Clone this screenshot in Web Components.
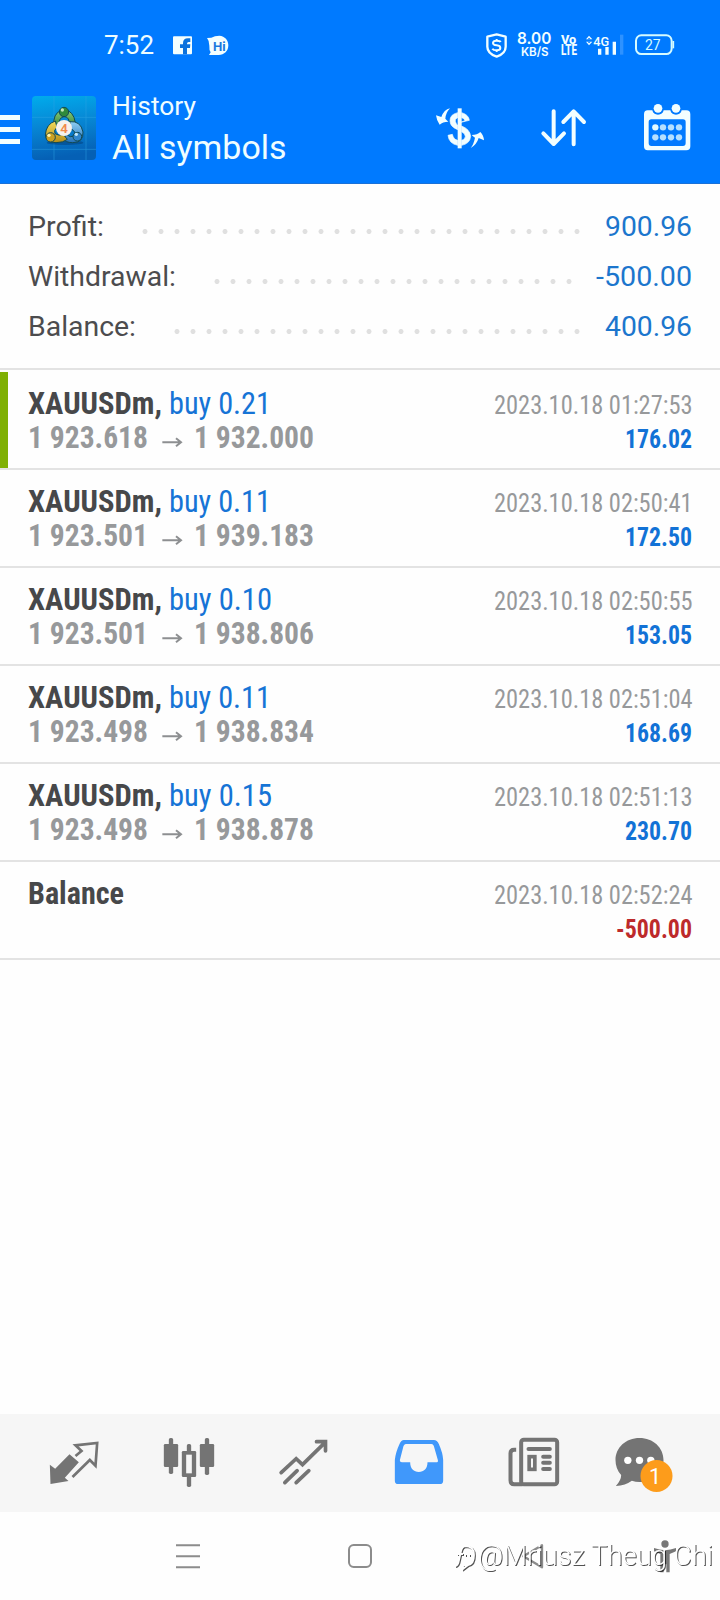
<!DOCTYPE html>
<html lang="en">
<head>
<meta charset="utf-8">
<title>History</title>
<style>
html,body{margin:0;padding:0;background:#fefefe;font-family:Roboto,"Liberation Sans",sans-serif}
</style>
</head>
<body>
<history-screen></history-screen>
<script>
const define=(n,c)=>customElements.define(n,c);

/* One line of text set to an exact advance width. */
define('fit-text',class extends HTMLElement{
  connectedCallback(){
    const a=(k,d)=>this.getAttribute(k)||d;
    const w=+a('w'),h=+a('h',30),b=+a('b',24);
    this.attachShadow({mode:'open'}).innerHTML=`<style>
      :host{display:block;flex:none;width:${w}px;height:${h}px}
      svg{display:block;overflow:visible}
      text{font-family:Roboto,sans-serif;font-size:${a('size')}px;font-weight:${a('weight',400)};font-stretch:${a('stretch','100%')};fill:currentColor}
    </style><svg width="${w}" height="${h}"><text x="0" y="${b}" textLength="${w}" lengthAdjust="spacingAndGlyphs">${this.textContent}</text></svg>`;
  }
});

const W='#f2feff';
const ICONS={
 fb:{vb:'519 107 58 56',s:`<rect x="519" y="108" width="57" height="54" rx="3" fill="${W}"/><path d="M549 162V143H540V132H549V129Q549 114 564 114H571V125H566Q561 125 561 130V132H571L570 143H561V162Z" fill="#0b72dd"/>`},
 hi:{vb:'621 105 66 62',s:`<path d="M621 114L634 113Q644 107 658 107C675 108 685 121 685 136C685 153 673 165 656 165H627L632 157Q627 150 628 137Q628 122 621 114Z" fill="${W}"/><text x="639" y="152" font-family="Inter,sans-serif" font-weight="700" font-size="35" textLength="38" lengthAdjust="spacingAndGlyphs" fill="#1978de">Hi</text>`},
 shield:{vb:'378 97 63 75',s:`<path d="M410 101L437 108V138Q437 158 410 168Q382 158 382 138V108Z" fill="none" stroke="${W}" stroke-width="7" stroke-linejoin="round"/><path d="M422 124Q420 120 410 120Q399 120 399 127Q399 133 410 134Q421 135 421 142Q421 149 410 149Q400 149 397 144M410 115V121M410 148V154" fill="none" stroke="${W}" stroke-width="6"/>`},
 speed:{vb:'471 97 104 78',s:`<g fill="${W}" font-family="Inter,sans-serif"><text x="471" y="134" font-size="48" font-weight="600" textLength="103" lengthAdjust="spacingAndGlyphs">8.00</text><text x="483" y="169" font-size="37" font-weight="600" textLength="83" lengthAdjust="spacingAndGlyphs">KB/S</text></g>`},
 volte:{vb:'602 97 48 78',s:`<g fill="${W}" font-family="Roboto,sans-serif" font-weight="800"><text x="602" y="132" font-size="36" textLength="46" lengthAdjust="spacingAndGlyphs">Vo</text><text x="602" y="166" font-size="42" textLength="48" lengthAdjust="spacingAndGlyphs">LTE</text></g>`},
 signal:{vb:'678 97 114 78',s:`<path d="M678 119L687 108L697 119ZM678 126L687 137L697 126Z" fill="${W}"/><path d="M683 119L687 114L692 119ZM683 126L687 131L692 126Z" fill="#007aff"/><text x="700" y="138" font-size="41" font-weight="500" font-family="Roboto,sans-serif" textLength="48" lengthAdjust="spacingAndGlyphs" fill="${W}">4G</text><path d="M719 147V165M741 142V165M763 126V165" stroke="${W}" stroke-width="10"/><path d="M785 105V165" stroke="#2e92ff" stroke-width="10"/>`},
 battery:{vb:'825 97 119 78',s:`<rect x="828" y="107" width="107" height="56" rx="16" fill="none" stroke="#d6fbff" stroke-width="6"/><path d="M940 124V146" stroke="#d6fbff" stroke-width="5"/><text x="855" y="150" font-size="44" font-family="Roboto,sans-serif" textLength="47" lengthAdjust="spacingAndGlyphs" fill="#d6fbff">27</text>`},
 menu:{vb:'0 345 60 87',s:`<path d="M0 352.500H60M0 388.500H60M0 424.500H60" stroke="${W}" stroke-width="15"/>`},
 logo:{vb:'36 48 192 192',s:`<defs><linearGradient id="bg" x1="0" y1="0" x2=".15" y2="1"><stop offset="0" stop-color="#00acec"/><stop offset=".45" stop-color="#0789d6"/><stop offset="1" stop-color="#0560b5"/></linearGradient>
  <linearGradient id="gr" x1="0" y1="0" x2="0" y2="1"><stop offset="0" stop-color="#8fd07a"/><stop offset="1" stop-color="#2f7d35"/></linearGradient>
  <linearGradient id="ye" x1="0" y1="0" x2="0" y2="1"><stop offset="0" stop-color="#f2dc5c"/><stop offset="1" stop-color="#b58d18"/></linearGradient>
  <linearGradient id="bl" x1="0" y1="0" x2="0" y2="1"><stop offset="0" stop-color="#8fd0f4"/><stop offset="1" stop-color="#2370b8"/></linearGradient></defs>
  <rect x="36" y="48" width="192" height="192" rx="12" fill="url(#bg)"/>
  <path d="M102 48V240M198 48V240M36 112H228M36 208H228" stroke="#2fa4e4" stroke-width="2" opacity=".7"/>
  <ellipse cx="135" cy="188" rx="55" ry="7" fill="#04427f" opacity=".55"/>
  <g stroke="#124a54" stroke-width="3">
  <path d="M101 140Q98 100 124 91Q150 85 162 112Q170 128 161 142L147 138Q151 110 132 110Q116 112 116 138Z" fill="url(#gr)"/><circle cx="132" cy="96" r="14" fill="#2f8a3c"/>
  <path d="M150 125Q182 122 189 156Q191 188 158 188Q136 188 130 176L140 164Q150 174 163 168Q171 156 151 145Z" fill="url(#bl)"/><circle cx="172" cy="170" r="13" fill="#2f86cd"/>
  <path d="M106 123Q78 132 76 165Q79 188 108 188Q130 188 142 178L130 164Q115 168 105 161Q100 151 111 142Z" fill="url(#ye)"/><circle cx="92" cy="172" r="14" fill="#caa022"/></g>
  <circle cx="127" cy="90" r="5" fill="#c5e7b8"/><circle cx="169" cy="163" r="5" fill="#c2e8fa"/><circle cx="87" cy="166" r="5" fill="#fff5b0"/>
  <circle cx="132" cy="144" r="24" fill="#f6f2ec"/><text x="132" y="158" font-family="Roboto,sans-serif" font-weight="600" font-size="40" text-anchor="middle" fill="#f08a4b">4</text>`},
 dollar:{vb:'228 320 144 126',s:`<path d="M299 324V444" stroke="${W}" stroke-width="12"/><path d="M302 366L328 360Q326 343 305 337V352Q313 353 315 361ZM293 337V352Q284 356 286 363Q288 372 293 374V388Q270 379 270 361Q270 342 293 337M305 377Q330 387 332 408Q330 430 305 435V420Q316 417 316 408Q315 399 305 394ZM293 435Q267 430 264 405L277 402Q281 418 293 420Z" fill="${W}" stroke="${W}" stroke-width="2"/><path d="M270 324Q252 328 244 350L228 345Q230 362 239 373Q248 364 265 364Q260 360 256 355Q257 338 270 324ZM332 443Q350 433 356 413L372 420Q371 405 361 395Q352 404 335 404Q340 409 345 412Q341 432 332 443Z" fill="${W}"/>`},
 sort:{vb:'544 328 136 112',s:`<path d="M582 335V432M551 401L582 433L613 401M642 434V336M611 367L642 335L673 367" fill="none" stroke="${W}" stroke-width="12" stroke-linecap="round" stroke-linejoin="round"/>`},
 calendar:{vb:'852 311 139 139',s:`<path fill-rule="evenodd" d="M863 330H877Q880 343 894 343Q908 343 911 330H931Q934 343 948 343Q962 343 965 330H979Q991 330 991 342V438Q991 450 979 450H863Q852 450 852 438V342Q852 330 863 330ZM874 357Q866 357 866 365V428Q866 437 874 437H969Q977 437 977 428V365Q977 357 969 357Z" fill="${W}"/><circle cx="894" cy="324" r="13" fill="${W}"/><circle cx="948" cy="324" r="13" fill="${W}"/><g fill="#b5e0ff"><circle cx="886" cy="381" r="9.5" fill="#e3fbff"/><circle cx="909" cy="381" r="9.5"/><circle cx="933" cy="381" r="9.5"/><circle cx="957" cy="381" r="9.5"/><circle cx="886" cy="411" r="9.5"/><circle cx="909" cy="411" r="9.5"/><circle cx="933" cy="411" r="9.5"/><circle cx="957" cy="411" r="9.5"/></g>`},
 arrow:{vb:'484 740 60 32',s:`<path d="M485 756H541M526 744L541 756L526 768" fill="none" stroke="#8d8f91" stroke-width="6"/>`},
 quotes:{vb:'130.5 99 180 180',s:`<path d="M148 194L164 206L207 163L235 187L193 233L204 243L150 252Z" fill="#747474"/><path d="M225 168L243 153L225 136L290 129L285 197L268 180L216 231" fill="none" stroke="#747474" stroke-width="8"/>`},
 charts:{vb:'475.5 99 180 180',s:`<g fill="#747474"><rect x="505" y="114" width="13" height="108" rx="5"/><rect x="490" y="132" width="43" height="69" rx="4"/><rect x="559" y="132" width="13" height="129" rx="5"/><rect x="544" y="153" width="43" height="78" rx="4"/><rect x="613" y="114" width="13" height="111" rx="5"/><rect x="598" y="132" width="43" height="69" rx="4"/></g><rect x="557" y="164" width="17" height="56" fill="#f6f6f6"/>`},
 trade:{vb:'820.5 99 180 180',s:`<path d="M842 218L887 176L906 194L974 127M948 125H975V153M853 248L890 212M887 248L925 212" fill="none" stroke="#747474" stroke-width="11" stroke-linecap="round"/>`},
 inbox:{vb:'85.5 99 180 180',s:`<path fill-rule="evenodd" d="M130 120H220Q230 120 235 132Q247 159 248 180V242Q248 252 238 252H113Q103 252 103 242V180Q105 158 117 132Q122 120 130 120ZM136 132Q132 132 129 138L118 181Q118 187 124 187H149C149 207 160 216 175 216C190 216 201 207 201 187H227Q234 187 232 180L220 138Q218 132 213 132Z" fill="#4098fb"/>`},
 news:{vb:'430.5 99 180 180',s:`<g fill="none" stroke="#747474" stroke-width="12"><rect x="482" y="119" width="108" height="134" rx="8"/><path d="M467 149H461Q450 149 450 160V241Q450 253 461 253H486"/><path d="M504 147H568M548 170H568M548 188H568M548 207H568" stroke-linecap="round"/><rect x="506" y="170" width="17" height="38" stroke-width="11"/></g>`},
 chat:{vb:'775.5 99 180 180',s:`<path d="M837 114C878 114 909 143 909 180C909 218 878 246 837 246Q825 246 814 242Q795 256 766 258Q782 241 782 225Q765 207 765 180C765 143 796 114 837 114Z" fill="#747474"/><g fill="#fff"><circle cx="802" cy="181" r="11"/><circle cx="837" cy="181" r="11"/><circle cx="871" cy="181" r="11"/></g><circle cx="888" cy="228" r="48" fill="#fd9c1b"/><text x="884" y="251" font-family="Roboto,sans-serif" font-size="65" text-anchor="middle" fill="#fff">1</text>`},
 recents:{vb:'528 431 72 75',s:`<path d="M528 435H600M528 468H600M528 501H600" stroke="#8c8c8c" stroke-width="6"/>`},
 home:{vb:'1044 432 72 72',s:`<rect x="1047" y="435" width="66" height="66" rx="14" fill="none" stroke="#8c8c8c" stroke-width="6"/>`},
 back:{vb:'480 431 72 75',s:`<path d="M546 435V501L490 468Z" fill="none" stroke="#8c8c8c" stroke-width="7" stroke-linejoin="round"/>`},
 person:{vb:'881 419 72 99',s:`<circle cx="917" cy="431" r="11" fill="#777"/><path d="M884 443Q917 456 950 443V453L931 461V516H921V492H913V516H903V461L884 453Z" fill="#777"/>`}
};
define('ui-icon',class extends HTMLElement{
  connectedCallback(){
    const i=ICONS[this.getAttribute('name')],[, ,w,h]=i.vb.split(' ');
    this.attachShadow({mode:'open'}).innerHTML=`<style>:host{display:block;flex:none;width:${w/3}px;height:${h/3}px}svg{display:block;overflow:visible}</style><svg width="${w/3}" height="${h/3}" viewBox="${i.vb}">${i.s}</svg>`;
  }
});

class Templated extends HTMLElement{
  connectedCallback(){this.attachShadow({mode:'open'}).innerHTML=this.view()}
}

define('status-bar',class extends Templated{view(){return `<style>
  :host{display:flex;align-items:center;height:90px;padding:0 45.300px 0 104px;box-sizing:border-box;color:#effdff}
  fit-text{margin-right:19px}.hi{margin-left:15px}.r{margin-left:auto;display:flex;align-items:center}
  .v{margin:0 9.300px 0 9px}.s{margin-left:10px}.b{margin-left:11px}
  </style><fit-text w="50" h="26" b="21.500" size="25.500">7:52</fit-text><ui-icon name="fb"></ui-icon><ui-icon class="hi" name="hi"></ui-icon>
  <div class="r"><ui-icon name="shield"></ui-icon><ui-icon class="s" name="speed"></ui-icon><ui-icon class="v" name="volte"></ui-icon><ui-icon name="signal"></ui-icon><ui-icon class="b" name="battery"></ui-icon></div>`}});

define('title-bar',class extends Templated{view(){return `<style>
  :host{display:flex;align-items:flex-start;height:94px;color:#effdff}
  .m{margin:25px 12px 0 0}.l{margin:6px 16px 0 0}.t{flex:1;padding-top:5px}
  .d{margin-top:16.700px}.s{margin:19.300px 54.500px 0 56.800px}.c{margin:13.700px 29.700px 0 3px}
  </style><ui-icon class="m" name="menu"></ui-icon><ui-icon class="l" name="logo"></ui-icon>
  <div class="t"><fit-text w="84" h="36" b="20" size="26">History</fit-text><fit-text w="174.500" h="40" b="28" size="34">All symbols</fit-text></div>
  <ui-icon class="d" name="dollar"></ui-icon><ui-icon class="s" name="sort"></ui-icon><ui-icon class="c" name="calendar"></ui-icon>`}});

define('summary-row',class extends Templated{view(){const g=k=>this.getAttribute(k);return `<style>
  :host{display:flex;height:50px;color:#4c4c4e}
  .dots{margin-top:19px;margin-left:auto;margin-right:${g('gap')}px;width:${g('dots')*16}px;height:5px;background:radial-gradient(circle,#e0e0e0 2.200px,transparent 2.800px) 0 0/16px 5px}
  .v{color:#1c76cd}
  </style><fit-text w="${g('lw')}" h="34" b="26" size="28">${g('label')}</fit-text><div class="dots"></div><fit-text class="v" w="${g('vw')}" h="34" b="26" size="28">${g('value')}</fit-text>`}});

define('deal-row',class extends Templated{view(){const g=k=>this.getAttribute(k);
  const side=g('side')?`<fit-text class="b" w="${g('bw')}" h="34" b="25.700" size="31.500" stretch="75%">${g('side')}</fit-text>`:'';
  const price=g('from')?`<div class="p"><fit-text w="120" h="34" b="25.700" size="31.500" weight="700" stretch="75%">${g('from')}</fit-text><ui-icon name="arrow"></ui-icon><fit-text w="120" h="34" b="25.700" size="31.500" weight="700" stretch="75%">${g('to')}</fit-text></div>`:'';
  return `<style>
  :host{display:flex;justify-content:space-between;height:98px;box-sizing:border-box;padding:16px 28px 0 28px;border-bottom:2px solid #e3e3e3;color:#47484a}
  :host([active]){background:linear-gradient(#7fb004,#7fb004) 0 0/8px 96px no-repeat}
  .n{display:flex}.b{margin-left:7px;color:#1674d6}.p{display:flex;color:#97999b}
  .p ui-icon{margin:14.500px 12.500px 0 13.500px}
  .r{display:flex;flex-direction:column;align-items:flex-end;color:#97999b}
  .a{color:${g('loss')!==null?'#bd2a2b':'#1272d6'}}
  </style><div><div class="n"><fit-text w="${g('nw')}" h="34" b="25.700" size="31.500" weight="700" stretch="75%">${g('name')}</fit-text>${side}</div>${price}</div>
  <div class="r"><fit-text w="198.500" h="34" b="25.700" size="25.800" stretch="75%">${g('date')}</fit-text><fit-text class="a" w="${g('aw')}" h="34" b="25.700" size="25.800" weight="700" stretch="75%">${g('amount')}</fit-text></div>`}});

define('tab-bar',class extends Templated{view(){return `<style>
  :host{display:grid;grid-template-columns:repeat(6,115px);padding-left:16px;height:98px;background:#f6f6f6;align-items:center;justify-items:center}
  </style>${['quotes','charts','trade','inbox','news','chat'].map(n=>`<ui-icon name="${n}"></ui-icon>`).join('')}`}});

define('nav-bar',class extends Templated{view(){return `<style>
  :host{display:grid;position:relative;grid-template-columns:172px 172px 172px 94px;padding-left:102px;height:88px;align-items:center;justify-items:center}
  .w{position:absolute;right:7.500px;top:29px;display:flex;color:#fff;filter:drop-shadow(1px 1px 0 rgba(0,0,0,.68))}
  svg{overflow:visible;margin:4px 3px 0 0}
  </style><ui-icon name="recents"></ui-icon><ui-icon name="home"></ui-icon><ui-icon name="back"></ui-icon><ui-icon name="person"></ui-icon>
  <div class="w"><svg width="21" height="26" viewBox="0 0 21 26"><path d="M1 21Q4 21 5 15L7 6Q8 1 12 1M3 9H9M11 1Q20 1 20 10Q20 19 14 20L9 24V20M11 10H12M15 10H16" fill="none" stroke="#fff" stroke-width="1.800"/></svg><fit-text w="235" h="36" b="24" size="28" weight="300">@Mriusz Theug Chi</fit-text></div>`}});

define('history-screen',class extends Templated{view(){
 const d=[['buy 0.21',102,'1 923.618','1 932.000','01:27:53','176.02'],['buy 0.11',102,'1 923.501','1 939.183','02:50:41','172.50'],['buy 0.10',103,'1 923.501','1 938.806','02:50:55','153.05'],['buy 0.11',102,'1 923.498','1 938.834','02:51:04','168.69'],['buy 0.15',103,'1 923.498','1 938.878','02:51:13','230.70']];
 return `<style>
  :host{display:grid;grid-template-rows:184px 186px 1fr 98px 88px;width:720px;height:1600px;overflow:hidden}
  header{background:#007aff;box-shadow:inset 0 -1px 0 #1971d8}
  .sum{padding:26px 28px 0 28px;box-sizing:border-box;border-bottom:2px solid #e3e3e3}
  main{padding-top:2px}
  </style><header><status-bar></status-bar><title-bar></title-bar></header>
  <section class="sum"><summary-row label="Profit:" lw="76" dots="28" gap="20" value="900.96" vw="87"></summary-row><summary-row label="Withdrawal:" lw="148" dots="23" gap="19" value="-500.00" vw="96"></summary-row><summary-row label="Balance:" lw="108" dots="26" gap="20" value="400.96" vw="87"></summary-row></section>
  <main>${d.map((r,i)=>`<deal-row ${i?'':'active'} name="XAUUSDm," nw="134" side="${r[0]}" bw="${r[1]}" from="${r[2]}" to="${r[3]}" date="2023.10.18 ${r[4]}" amount="${r[5]}" aw="67"></deal-row>`).join('')}<deal-row name="Balance" nw="96" date="2023.10.18 02:52:24" amount="-500.00" aw="76" loss></deal-row></main>
  <tab-bar></tab-bar><nav-bar></nav-bar>`}});
</script>
</body>
</html>
